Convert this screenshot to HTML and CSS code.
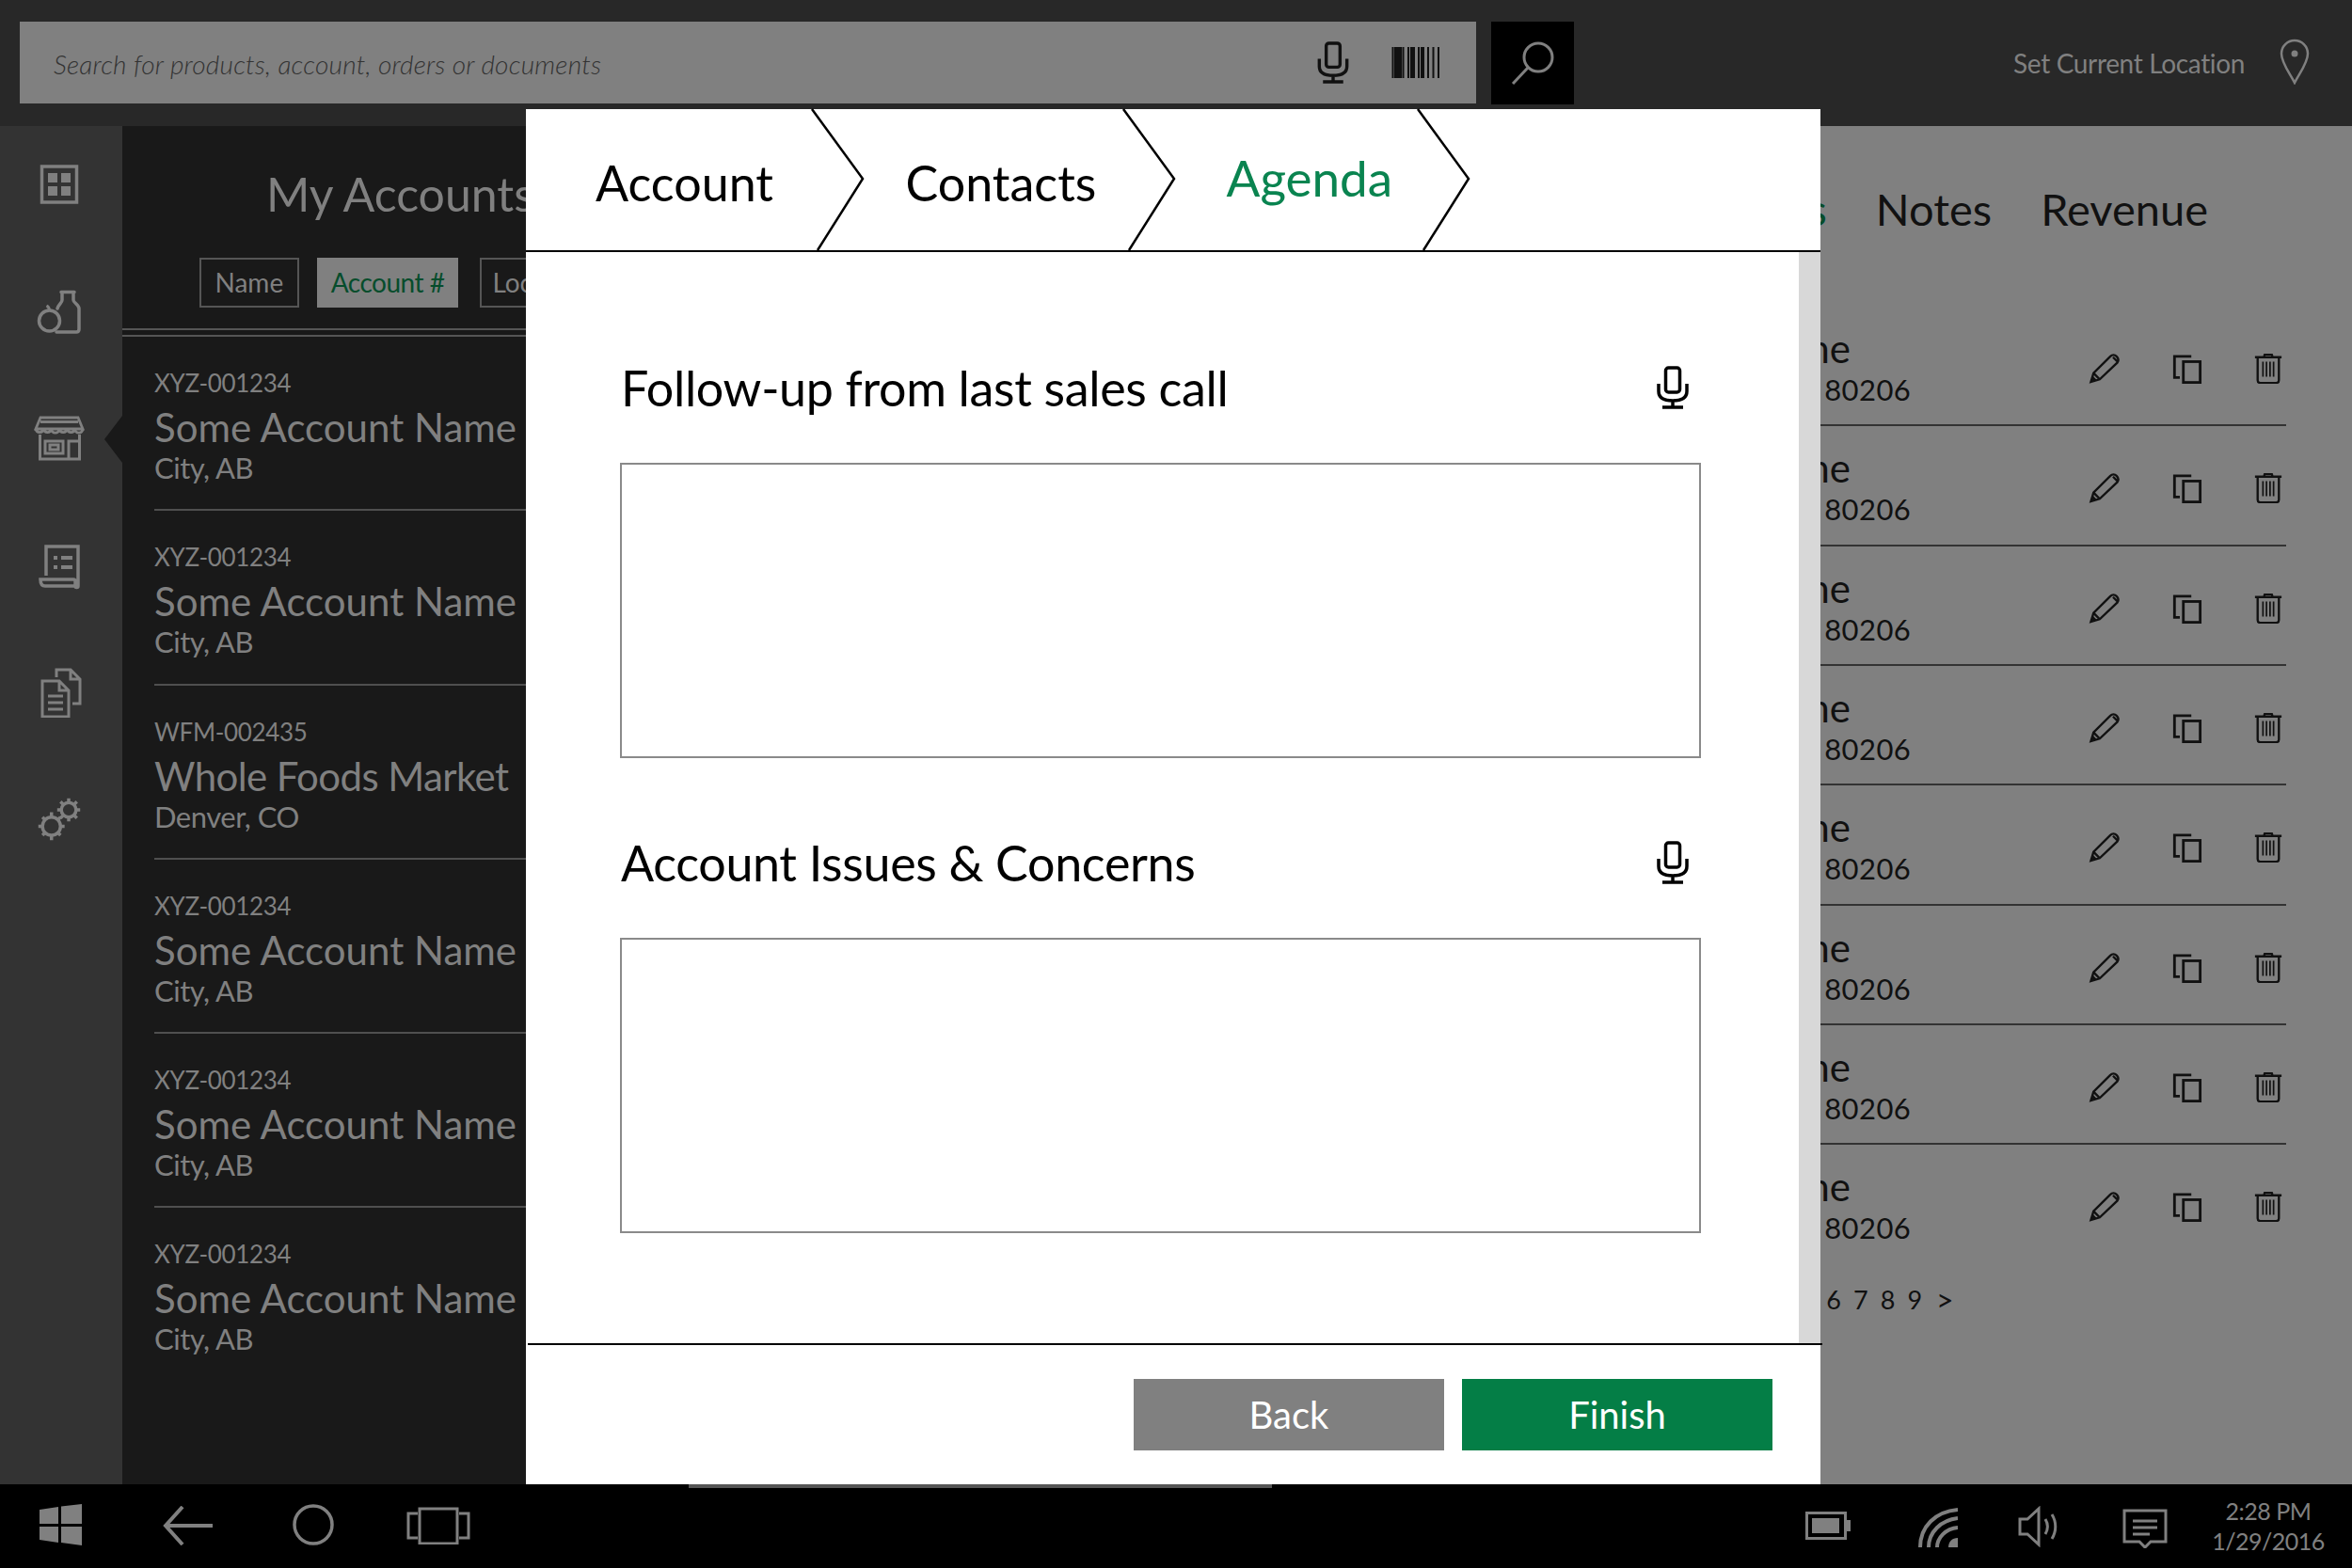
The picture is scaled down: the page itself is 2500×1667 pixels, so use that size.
FILE: index.html
```html
<!DOCTYPE html>
<html lang="en">
<head>
<meta charset="utf-8">
<title>My Accounts</title>
<link rel="stylesheet" href="styles.css">
</head>
<body>
<svg class="defs" width="0" height="0" aria-hidden="true">
  <defs>
    <symbol id="mic" viewBox="0 0 36 46">
      <rect x="10.5" y="2" width="15" height="26" rx="3" fill="none" stroke="currentColor" stroke-width="3.5"/>
      <path d="M3 19v8c0 7 6 10 15 10s15-3 15-10v-8M18 37v6M7 44h22" fill="none" stroke="currentColor" stroke-width="3.5"/>
    </symbol>
    <symbol id="pencil" viewBox="0 0 36 34">
      <path d="M2 32l3-10L24 3c2-2 5-2 7 0s3 4 1 7L12 29zM5 22l7 7M27 4l6 6" fill="none" stroke="currentColor" stroke-width="2.5"/>
      <path d="M2 32l2-7 5 5z" fill="currentColor"/>
    </symbol>
    <symbol id="copy" viewBox="0 0 34 34">
      <path d="M22 3H3v24h6" fill="none" stroke="currentColor" stroke-width="3"/>
      <rect x="13" y="9" width="19" height="23.500" fill="none" stroke="currentColor" stroke-width="3"/>
    </symbol>
    <symbol id="trash" viewBox="0 0 30 34">
      <path d="M0 4h30M10 4l1-3h8l1 3M3 4v26c0 2 1 3 3 3h18c2 0 3-1 3-3V4" fill="none" stroke="currentColor" stroke-width="2.500"/>
      <path d="M9 9v17M13 9v17M17 9v17M21 9v17" fill="none" stroke="currentColor" stroke-width="1.800"/>
    </symbol>
  </defs>
</svg>

<div class="app">
  <header class="topbar">
    <div class="search-field">
      <span class="search-hint">Search for products, account, orders or documents</span>
      <svg class="ic-mic-dark" viewBox="0 0 36 46"><use href="#mic"/></svg>
      <svg class="ic-barcode" viewBox="0 0 52 33">
        <path d="M1.500 0v33M7 0v33M12.500 0v33M18 0v33M24 0v33M29 0v33M34 0v33M39 0v33M44.500 0v33M50 0v33" fill="none" stroke="#111" stroke-width="2"/>
        <path d="M3 0h3v33H3zM8 0h3v33H8zM20 0h3v33h-3zM31 0h2.500v33H31z" fill="#111"/>
      </svg>
    </div>
    <button class="search-btn" type="button" aria-label="Search">
      <svg class="ic-search" viewBox="0 0 47 46"><circle cx="29" cy="17" r="15" fill="none" stroke="#808080" stroke-width="3"/><path d="M18 28L2 45" fill="none" stroke="#808080" stroke-width="3"/></svg>
    </button>
    <div class="location">
      <span>Set Current Location</span>
      <svg class="ic-pin" viewBox="0 0 32 49"><path d="M16 47C11 37 2 26 2 16a14 14 0 0 1 28 0c0 10-9 21-14 31z" fill="none" stroke="#808080" stroke-width="2.500"/><circle cx="16" cy="16" r="3.500" fill="#808080"/></svg>
    </div>
  </header>

  <div class="main">
    <nav class="sidebar">
      <div class="nav-item">
        <svg class="ic-nav" viewBox="0 0 54 54"><rect x="8.500" y="8" width="37" height="38" fill="none" stroke="#808080" stroke-width="3.500"/><path d="M15 15h10v10H15zM29 15h10v10H29zM15 29h10v10H15zM29 29h10v10H29z" fill="#808080"/></svg>
      </div>
      <div class="nav-item">
        <svg class="ic-nav" viewBox="0 0 54 54"><path d="M29 6.500h14M30 7v8c0 3-4 5-5 9M42 7v8c0 3 6 5 6 9v22c0 2-1 3-3 3H24" fill="none" stroke="#808080" stroke-width="3.500" stroke-linejoin="round" stroke-linecap="round"/><circle cx="16.500" cy="37" r="11" fill="none" stroke="#808080" stroke-width="3.500"/><path d="M16.500 26c0-2-1-4-3-5" fill="none" stroke="#808080" stroke-width="3"/></svg>
      </div>
      <div class="nav-item is-active">
        <svg class="ic-nav" viewBox="0 0 54 54"><path d="M7 5h40l5 12H2zM7 9.500h40M2 17a4.200 4.200 0 0 0 8.300 0a4.200 4.200 0 0 0 8.300 0a4.200 4.200 0 0 0 8.400 0a4.200 4.200 0 0 0 8.300 0a4.200 4.200 0 0 0 8.300 0a4.200 4.200 0 0 0 8.400 0" fill="none" stroke="#808080" stroke-width="2.800"/><path d="M6.500 23v26h42V23M37 49V30h11M12 30h19v13H12zM17 34h9v5h-9z" fill="none" stroke="#808080" stroke-width="3"/></svg>
      </div>
      <div class="nav-item">
        <svg class="ic-nav" viewBox="0 0 54 54"><path d="M13 38V7h34v42c0 2-3 2-3 0v-5c0-2 0-2-2-2H7c0 5 2 7 5 7h33" fill="none" stroke="#808080" stroke-width="3.500"/><path d="M21 17h4v4h-4zM21 27h4v4h-4zM29 17h12v4H29zM29 27h12v4H29z" fill="#808080"/></svg>
      </div>
      <div class="nav-item">
        <svg class="ic-nav" viewBox="0 -1 54 54"><path d="M24 10V2h15l10 10v26h-8M39 2v10h10" fill="none" stroke="#808080" stroke-width="3"/><path d="M9 14h18l10 10v28H9zM27 14v10h10M15 30h16M15 37h16M15 44h16" fill="none" stroke="#808080" stroke-width="3"/></svg>
      </div>
      <div class="nav-item">
        <svg class="ic-nav" viewBox="-5.500 -2.500 62 62"><circle cx="37" cy="17" r="9" fill="none" stroke="#808080" stroke-width="4"/><path d="M37 3v5M37 26v5M23 17h5M46 17h5M27 7l4 4M43 23l4 4M47 7l-4 4M31 23l-4 4" stroke="#808080" stroke-width="4"/><circle cx="16" cy="37" r="11" fill="none" stroke="#808080" stroke-width="4"/><path d="M16 20v6M16 48v6M0 37h5M27 37h5M5 26l4 4M23 44l4 4M27 26l-4 4M9 44l-4 4" stroke="#808080" stroke-width="4"/></svg>
      </div>
    </nav>

    <section class="list-panel">
      <h1 class="list-title">My Accounts</h1>
      <div class="chips">
        <span class="chip">Name</span>
        <span class="chip is-on">Account #</span>
        <span class="chip chip-loc">Location</span>
      </div>
      <div class="double-rule"></div>
      <ul class="acct-list">
        <li class="acct"><span class="acct-id">XYZ-001234</span><span class="acct-name">Some Account Name</span><span class="acct-city">City, AB</span></li>
        <li class="acct"><span class="acct-id">XYZ-001234</span><span class="acct-name">Some Account Name</span><span class="acct-city">City, AB</span></li>
        <li class="acct"><span class="acct-id">WFM-002435</span><span class="acct-name acct-name-tight">Whole Foods Market</span><span class="acct-city">Denver, CO</span></li>
        <li class="acct"><span class="acct-id">XYZ-001234</span><span class="acct-name">Some Account Name</span><span class="acct-city">City, AB</span></li>
        <li class="acct"><span class="acct-id">XYZ-001234</span><span class="acct-name">Some Account Name</span><span class="acct-city">City, AB</span></li>
        <li class="acct"><span class="acct-id">XYZ-001234</span><span class="acct-name">Some Account Name</span><span class="acct-city">City, AB</span></li>
      </ul>
    </section>

    <section class="detail">
      <div class="detail-tabs">
        <span class="detail-tab is-on">Contacts</span>
        <span class="detail-tab">Notes</span>
        <span class="detail-tab">Revenue</span>
      </div>
      <div class="rows">
        <div class="row"><div class="row-text"><span class="row-name">Some Account Name</span><span class="row-addr">123 Main St, Denver, CO 80206</span></div><svg class="act act-pencil"><use href="#pencil"/></svg><svg class="act act-copy"><use href="#copy"/></svg><svg class="act act-trash"><use href="#trash"/></svg></div>
        <div class="row"><div class="row-text"><span class="row-name">Some Account Name</span><span class="row-addr">123 Main St, Denver, CO 80206</span></div><svg class="act act-pencil"><use href="#pencil"/></svg><svg class="act act-copy"><use href="#copy"/></svg><svg class="act act-trash"><use href="#trash"/></svg></div>
        <div class="row"><div class="row-text"><span class="row-name">Some Account Name</span><span class="row-addr">123 Main St, Denver, CO 80206</span></div><svg class="act act-pencil"><use href="#pencil"/></svg><svg class="act act-copy"><use href="#copy"/></svg><svg class="act act-trash"><use href="#trash"/></svg></div>
        <div class="row"><div class="row-text"><span class="row-name">Some Account Name</span><span class="row-addr">123 Main St, Denver, CO 80206</span></div><svg class="act act-pencil"><use href="#pencil"/></svg><svg class="act act-copy"><use href="#copy"/></svg><svg class="act act-trash"><use href="#trash"/></svg></div>
        <div class="row"><div class="row-text"><span class="row-name">Some Account Name</span><span class="row-addr">123 Main St, Denver, CO 80206</span></div><svg class="act act-pencil"><use href="#pencil"/></svg><svg class="act act-copy"><use href="#copy"/></svg><svg class="act act-trash"><use href="#trash"/></svg></div>
        <div class="row"><div class="row-text"><span class="row-name">Some Account Name</span><span class="row-addr">123 Main St, Denver, CO 80206</span></div><svg class="act act-pencil"><use href="#pencil"/></svg><svg class="act act-copy"><use href="#copy"/></svg><svg class="act act-trash"><use href="#trash"/></svg></div>
        <div class="row"><div class="row-text"><span class="row-name">Some Account Name</span><span class="row-addr">123 Main St, Denver, CO 80206</span></div><svg class="act act-pencil"><use href="#pencil"/></svg><svg class="act act-copy"><use href="#copy"/></svg><svg class="act act-trash"><use href="#trash"/></svg></div>
        <div class="row"><div class="row-text"><span class="row-name">Some Account Name</span><span class="row-addr">123 Main St, Denver, CO 80206</span></div><svg class="act act-pencil"><use href="#pencil"/></svg><svg class="act act-copy"><use href="#copy"/></svg><svg class="act act-trash"><use href="#trash"/></svg></div>
      </div>
      <div class="pager"><span>1</span><span>2</span><span>3</span><span>4</span><span>5</span><span>6</span><span>7</span><span>8</span><span>9</span><span class="pager-next">&gt;</span></div>
    </section>
  </div>

  <footer class="taskbar">
    <div class="task-strip"></div>
    <div class="task-left">
      <svg class="t-win" viewBox="0 0 45 44"><path d="M0 6l20-3v18H0zM23 2.500L45 0v21H23zM0 24h20v17L0 38zM23 24h22v20l-22-3z" fill="#808080"/></svg>
      <svg class="t-back" viewBox="0 0 54 42"><path d="M54 21H4M22 1L4 21l18 20" fill="none" stroke="#808080" stroke-width="4"/></svg>
      <svg class="t-home" viewBox="0 0 44 44"><circle cx="22" cy="22" r="20" fill="none" stroke="#808080" stroke-width="3.500"/></svg>
      <svg class="t-tablet" viewBox="0 0 68 40"><rect x="14" y="2" width="40" height="37" fill="none" stroke="#808080" stroke-width="3"/><path d="M12 7H2v26h10M56 7h10v26H56" fill="none" stroke="#808080" stroke-width="3"/></svg>
    </div>
    <div class="task-right">
      <svg class="t-batt" viewBox="0 0 48 30"><rect x="1.500" y="1.500" width="41" height="27" fill="none" stroke="#808080" stroke-width="3"/><path d="M7 7h29v16H7zM44 9h4v12h-4z" fill="#808080"/></svg>
      <svg class="t-wifi" viewBox="0 0 42 42"><path d="M2 42C2 20 18 4 42 2M11 42C11 26 24 13 42 11M20 42C20 32 29 22 42 21" fill="none" stroke="#808080" stroke-width="4"/><path d="M32 42c0-6 4-10 10-10v10z" fill="#808080"/></svg>
      <svg class="t-vol" viewBox="0 0 42 44"><path d="M2 14h8L22 3v38L10 30H2z" fill="none" stroke="#808080" stroke-width="3"/><path d="M29 14c3 5 3 11 0 16M36 9c5 8 5 18 0 26" fill="none" stroke="#808080" stroke-width="3"/></svg>
      <svg class="t-note" viewBox="0 0 48 42"><path d="M2 2h44v33H30l-6 6-6-6H2z" fill="none" stroke="#808080" stroke-width="3"/><path d="M11 13h26M11 20h26M11 27h18" fill="none" stroke="#808080" stroke-width="3"/></svg>
      <div class="clock"><span>2:28 PM</span><span>1/29/2016</span></div>
    </div>
  </footer>
</div>

<div class="modal">
  <div class="steps">
    <div class="step step-a"><span>Account</span><svg class="chev" viewBox="0 0 56 150"><path d="M0 0l54 74L6 150" fill="none" stroke="#000" stroke-width="2.500"/></svg></div>
    <div class="step step-b"><span>Contacts</span><svg class="chev" viewBox="0 0 56 150"><path d="M0 0l54 74L6 150" fill="none" stroke="#000" stroke-width="2.500"/></svg></div>
    <div class="step step-c is-on"><span>Agenda</span><svg class="chev" viewBox="0 0 56 150"><path d="M0 0l54 74L6 150" fill="none" stroke="#000" stroke-width="2.500"/></svg></div>
  </div>
  <div class="modal-body">
    <div class="form">
      <div class="field">
        <div class="field-head"><span>Follow-up from last sales call</span><svg class="ic-mic"><use href="#mic"/></svg></div>
        <textarea class="field-box"></textarea>
      </div>
      <div class="field">
        <div class="field-head"><span>Account Issues &amp; Concerns</span><svg class="ic-mic"><use href="#mic"/></svg></div>
        <textarea class="field-box"></textarea>
      </div>
    </div>
    <div class="scroll-track"></div>
  </div>
  <div class="modal-foot">
    <button class="btn btn-back" type="button">Back</button>
    <button class="btn btn-finish" type="button">Finish</button>
  </div>
</div>
</body>
</html>
```

FILE: styles.css
```css
* { box-sizing: border-box; }
html, body { margin: 0; padding: 0; }
body { width: 2500px; height: 1667px; overflow: hidden; position: relative; background: #000; font-family: "Lato", "Open Sans", sans-serif; }
.defs { position: absolute; }
svg { display: block; }
ul { list-style: none; margin: 0; padding: 0; }

.app { display: flex; flex-direction: column; height: 1667px; }

/* top bar */
.topbar { height: 134px; background: #282828; display: flex; align-items: flex-start; padding: 23px 0 0 21px; flex: none; }
.search-field { width: 1548px; height: 87px; background: #808080; display: flex; align-items: center; padding: 0 36px; }
.search-hint { flex: 1; font-size: 28px; font-style: italic; font-weight: 300; letter-spacing: 0.2px; color: #333; margin-top: 2px; }
.ic-mic-dark { width: 36px; height: 45px; color: #111; margin-right: 44px; margin-left: 2px; }
.ic-barcode { width: 52px; height: 33px; margin-right: 2px; }
.search-btn { width: 88px; height: 88px; margin-left: 16px; background: #000; border: 0; padding: 0; display: flex; align-items: center; justify-content: center; }
.ic-search { width: 47px; height: 46px; }
.location { margin-left: auto; display: flex; align-items: center; height: 88px; padding-right: 45px; color: #808080; font-size: 28px; font-weight: 400; letter-spacing: -0.35px; }
.ic-pin { width: 32px; height: 49px; margin-left: 37px; margin-top: -4px; }

/* main */
.main { flex: 1; display: flex; min-height: 0; }
.sidebar { width: 130px; flex: none; background: #333; display: flex; flex-direction: column; gap: 35px; padding-top: 12px; }
.nav-item { height: 100px; display: flex; align-items: center; justify-content: center; position: relative; }
.ic-nav { width: 54px; height: 54px; margin-right: 4px; }
.is-active::after { content: ""; position: absolute; right: 0; top: 26px; border: 25px solid transparent; border-left: 0; border-right: 19px solid #191919; }

.list-panel { width: 800px; flex: none; background: #191919; color: #808080; overflow: hidden; }
.list-title { margin: 0; padding: 41px 0 0 153px; font-size: 50px; line-height: 62px; font-weight: 400; white-space: nowrap; }
.chips { display: flex; gap: 19px; margin: 37px 0 0 82px; }
.chip { height: 53px; padding: 0 14.5px; border: 2px solid #555; font-size: 28px; line-height: 49px; white-space: nowrap; }
.chip.is-on { background: #808080; border-color: #808080; color: #064d2c; padding: 0 13px; letter-spacing: -0.5px; }
.chip-loc { margin-left: 4px; padding: 0 11px; }
.double-rule { height: 9px; margin-top: 22px; border-top: 2px solid #555; border-bottom: 2px solid #555; }
.acct-list { margin-left: 34px; }
.acct { height: 185.3px; border-bottom: 2px solid #4f4f4f; display: flex; flex-direction: column; padding-top: 31px; }
.acct:last-child { border-bottom: 0; }
.acct-id { font-size: 26px; line-height: 36px; font-weight: 400; letter-spacing: -0.35px; }
.acct-name { font-size: 42px; line-height: 54px; margin-top: 2px; white-space: nowrap; }
.acct-name-tight { letter-spacing: -0.6px; }
.acct-city { font-size: 31px; line-height: 36px; font-weight: 400; margin-top: -2px; letter-spacing: -0.5px; }

.detail { flex: 1; background: #808080; color: #111; min-width: 0; }
.detail-tabs { display: flex; justify-content: flex-end; gap: 52px; padding: 59px 153px 0 0; font-size: 47px; line-height: 58px; height: 192px; }
.detail-tab.is-on { color: #064d2c; }
.rows { padding: 0 70px 0 652px; }
.row { height: 127.35px; border-bottom: 2px solid #333; display: flex; align-items: flex-start; padding-top: 50px; }
.row:last-child { border-bottom: 0; }
.row-text { flex: 1; display: flex; flex-direction: column; margin-top: -32px; white-space: nowrap; }
.row-name { font-size: 42px; line-height: 52px; }
.row-addr { font-size: 31px; line-height: 36px; margin-top: 0; letter-spacing: 0.42px; }
.act { height: 32px; color: #111; flex: none; }
.act-pencil { width: 35px; margin-right: 53px; }
.act-copy { width: 33px; margin-right: 55px; }
.act-trash { width: 30px; margin-right: 4px; }
.pager { display: flex; gap: 12px; padding-left: 868px; margin-top: 20px; font-size: 27px; line-height: 34px; letter-spacing: 1px; }
.pager-next { font-size: 32px; line-height: 34px; margin-left: 2px; }

/* taskbar */
.taskbar { height: 89px; flex: none; background: #000; display: flex; justify-content: space-between; position: relative; color: #808080; }
.task-strip { position: absolute; left: 732px; top: 0; width: 620px; height: 4px; background: #555; }
.task-left { display: flex; align-items: flex-start; padding-top: 21px; }
.t-win { width: 45px; height: 44px; margin-left: 42px; }
.t-back { width: 54px; height: 42px; margin-left: 85px; margin-top: 2px; }
.t-home { width: 44px; height: 44px; margin-left: 85px; }
.t-tablet { width: 68px; height: 40px; margin-left: 77px; margin-top: 3px; }
.task-right { display: flex; align-items: flex-start; padding: 0 32px 0 0; }
.t-batt { width: 48px; height: 30px; margin-top: 29px; }
.t-wifi { width: 42px; height: 42px; margin: 25px 0 0 72px; }
.t-vol { width: 42px; height: 44px; margin: 23px 0 0 64px; }
.t-note { width: 48px; height: 42px; margin: 26px 0 0 69px; }
.clock { width: 114px; margin: 12px 0 0 50px; display: flex; flex-direction: column; align-items: center; font-size: 25px; line-height: 32px; font-weight: 400; letter-spacing: -0.5px; white-space: nowrap; }

/* modal */
.modal { position: absolute; left: 559px; top: 116px; width: 1376px; height: 1462px; background: #fff; display: flex; flex-direction: column; }
.steps { height: 152px; flex: none; display: flex; border-bottom: 2px solid #000; }
.step { position: relative; height: 150px; font-size: 52px; line-height: 156px; color: #000; }
.step-a { width: 359.5px; padding-left: 74px; }
.step-b { width: 331px; padding-left: 44px; }
.step-c { width: 313px; padding-left: 54px; color: #0a8450; font-size: 53px; line-height: 146px; }
.chev { position: absolute; right: 0; top: 0; width: 56px; height: 150px; overflow: visible; }
.modal-body { flex: 1; display: flex; min-height: 0; }
.form { flex: 1; padding: 99px 104px 0 100px; }
.scroll-track { width: 23px; background: #d8d8d8; flex: none; }
.field { display: flex; flex-direction: column; }
.field + .field { margin-top: 66px; }
.field-head { display: flex; justify-content: space-between; align-items: center; height: 90px; flex: none; font-size: 52px; letter-spacing: -0.33px; color: #000; margin-bottom: 35px; padding: 0 12px 0 1px; }
.ic-mic { width: 36px; height: 46px; color: #000; }
.field-box { width: 1149px; height: 314px; border: 2px solid #8a8a8a; background: #fff; resize: none; border-radius: 0; outline: 0; flex: none; }
.modal-foot { height: 150px; flex: none; border-top: 2px solid #000; margin: 0 -2px 0 2px; display: flex; justify-content: flex-end; gap: 19px; padding: 36px 53px 0 0; }
.btn { width: 330px; height: 76px; border: 0; border-radius: 0; color: #fff; font: 400 40px/74px "Lato", "Open Sans", sans-serif; padding: 0; }
.btn-back { background: #808080; }
.btn-finish { background: #047e46; }
```
